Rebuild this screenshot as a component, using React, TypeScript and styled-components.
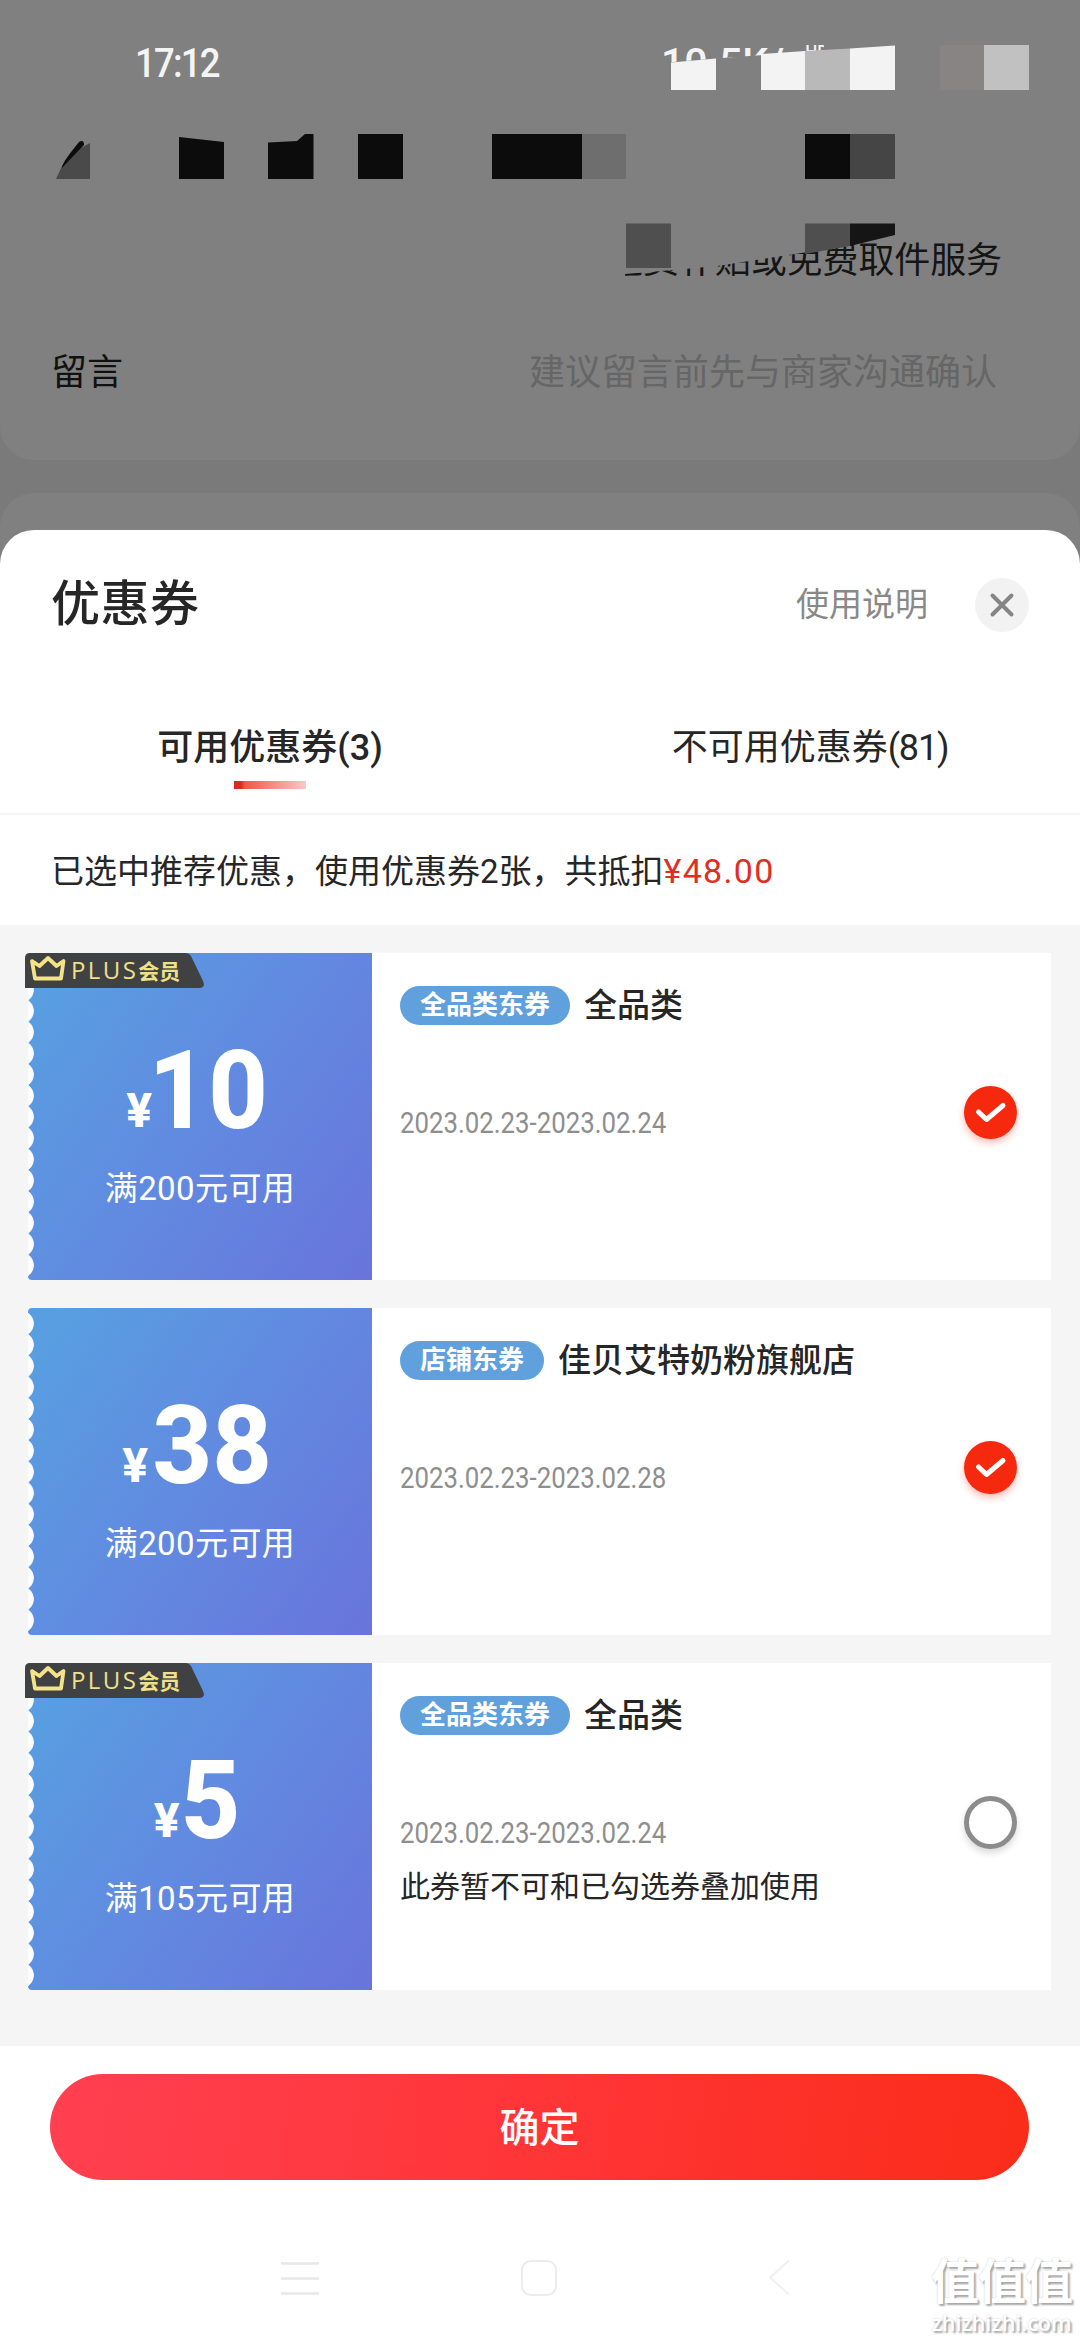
import React from "react";
import styled, { createGlobalStyle, css } from "styled-components";

const GlobalStyle = createGlobalStyle`
  * { box-sizing: border-box; }
  body {
    margin: 0;
    background: #7a7a7a;
    font-family: Roboto, "Noto Sans CJK SC", sans-serif;
    color: #262626;
  }
  button { font: inherit; border: 0; padding: 0; background: none; color: inherit; }
`;

const Screen = styled.div`
  position: relative;
  display: flex;
  flex-direction: column;
  width: 1080px;
  height: 2340px;
  overflow: hidden;
  background: #7a7a7a;
`;

/* dimmed order page behind the sheet */

const OrderCard = styled.section`
  display: flex;
  flex-direction: column;
  height: 460px;
  flex: none;
  background: #808080;
  border-radius: 0 0 34px 34px;
`;

const StatusBar = styled.header`
  display: flex;
  justify-content: space-between;
  height: 125px;
  padding: 39px 256px 0 135px;
  color: #f4f4f4;
  font-weight: 500;
  font-size: 40px;
  line-height: 48px;
`;

const Clock = styled.span`
  letter-spacing: -2px;
  font-size: 41px;
  transform: scaleX(0.89);
  transform-origin: left;
`;

const Network = styled.span`
  display: flex;
  align-items: flex-start;
  width: 163px;
  height: 48px;
  font-size: 41px;
  clip-path: polygon(0 0, 100% 0, 100% 12px, 74px 18px, 0 24px);
`;

const HdMark = styled.sup`
  margin-left: auto;
  font-size: 17px;
  line-height: 24px;
`;

const ServiceRow = styled.div`
  display: flex;
  justify-content: flex-end;
  height: 204px;
  padding: 109px 78px 0 0;
`;

const ServiceText = styled.span`
  height: 54px;
  font-size: 36px;
  line-height: 54px;
  letter-spacing: -0.1px;
  color: #151515;
  clip-path: polygon(18px 40px, 66px 36px, 110px 32px, 240px 12px, 288px 1px, 288px 0, 100% 0, 100% 100%, 18px 100%);
`;

const MessageRow = styled.div`
  display: flex;
  justify-content: space-between;
  padding: 17px 83px 0 51px;
  font-size: 36px;
  line-height: 54px;
  color: #111;
`;

const Placeholder = styled.span`
  color: #666;
`;

const NextCard = styled.section`
  height: 90px;
  flex: none;
  margin-top: 33px;
  background: #808080;
  border-radius: 34px 34px 0 0;
`;

const Mosaic = styled.svg`
  position: absolute;
  left: 0;
  top: 0;
`;

/* coupon sheet */

const Sheet = styled.main`
  display: flex;
  flex-direction: column;
  flex: 1;
  margin-top: -53px;
  background: #fff;
  border-radius: 34px 34px 0 0;
`;

const SheetHeader = styled.div`
  display: flex;
  align-items: center;
  height: 149px;
  padding: 0 51px;
`;

const Title = styled.h1`
  flex: 1;
  margin: 0;
  font-size: 49px;
  line-height: 60px;
  font-weight: 500;
  letter-spacing: 0.5px;
`;

const HelpLink = styled.a`
  margin-right: 47px;
  font-size: 33px;
  line-height: 48px;
  color: #888;
`;

const CloseButton = styled.button`
  display: grid;
  place-items: center;
  width: 54px;
  height: 54px;
  border-radius: 50%;
  background: #f2f2f2;
`;

const Tabs = styled.nav`
  display: grid;
  grid-template-columns: 1fr 1fr;
  height: 136px;
  border-bottom: 2px solid #f4f4f4;
`;

const Tab = styled.div<{ $active?: boolean }>`
  display: flex;
  flex-direction: column;
  align-items: center;
  padding-top: 44px;
  font-size: 36px;
  line-height: 50px;
  font-weight: ${(p) => (p.$active ? 500 : 400)};
`;

const Count = styled.span`
  letter-spacing: -1.2px;
`;

const TabLine = styled.i`
  width: 72px;
  height: 8px;
  margin-top: 8px;
  background: linear-gradient(90deg, #d82c20 0 7px, #f0584d 11px, #f9c9c6);
`;

const Summary = styled.p`
  margin: 0;
  height: 110px;
  padding: 30px 51px 0;
  font-size: 33px;
  line-height: 52px;
`;

const Saved = styled.span`
  color: #e02e24;
  font-size: 34px;
  letter-spacing: 1.3px;
`;

const CouponList = styled.div`
  display: flex;
  flex-direction: column;
  gap: 28px;
  height: 1121px;
  padding: 28px 29px 0 28px;
  background: #f5f5f5;
`;

const Coupon = styled.article`
  display: flex;
  height: 327px;
`;

const Stub = styled.div`
  position: relative;
  display: flex;
  flex-direction: column;
  align-items: center;
  width: 344px;
  padding-top: 84px;
  color: #fff;
  background: linear-gradient(125deg, #589fe1 5%, #6288e0 55%, #6974db);
  border-radius: 4px 0 0 4px;

  &::before {
    content: "";
    position: absolute;
    left: 0;
    top: 5px;
    width: 7px;
    height: 318px;
    background: radial-gradient(circle at -7px 50%, #fcfcfc 12.4px, transparent 13.2px) 0 0 / 7px 21.2px repeat-y;
  }
`;

const Amount = styled.div`
  display: flex;
  align-items: baseline;
  margin-right: 8px;
  font-size: 110px;
  line-height: 108px;
  font-weight: 800;
`;

const Currency = styled.span`
  position: relative;
  top: -1px;
  left: 2px;
  font-size: 48px;
`;

const Digits = styled.span<{ $leadingOne: boolean }>`
  margin-left: ${(p) => (p.$leadingOne ? -9 : -1)}px;
  transform: scaleX(0.94);
  transform-origin: right;
`;

const Threshold = styled.div`
  font-size: 33px;
  line-height: 46px;
  letter-spacing: 0.4px;
`;

const Ribbon = styled.div`
  position: absolute;
  left: -3px;
  top: 0;
  display: flex;
  align-items: center;
  width: 179px;
  height: 35px;
  color: #efe08c;
  white-space: nowrap;
`;

const RibbonShape = styled.svg`
  position: absolute;
  inset: 0;
`;

const RibbonText = styled.span`
  position: relative;
  margin-left: 46px;
  font-family: "Open Sans", "Noto Sans CJK SC", sans-serif;
  font-size: 24px;
  line-height: 34px;
  letter-spacing: 2.4px;

  b {
    font-size: 21px;
    font-weight: 700;
    letter-spacing: 0;
  }
`;

const Details = styled.div`
  display: flex;
  flex: 1;
  align-items: center;
  justify-content: space-between;
  padding-right: 34px;
  background: #fff;
`;

const Info = styled.div`
  align-self: stretch;
  padding: 29px 0 0 28px;
`;

const Heading = styled.div`
  display: flex;
  align-items: center;
  gap: 14px;
  height: 47px;
  font-size: 33px;
  font-weight: 500;
`;

const Scope = styled.span`
  height: 44px;
  line-height: 43px;
`;

const Tag = styled.span`
  height: 39px;
  padding: 0 20px;
  border-radius: 20px;
  background: #5fa0dd;
  color: #fff;
  font-size: 26px;
  line-height: 39px;
  font-weight: 700;
`;

const Period = styled.div`
  margin-top: 74px;
  width: max-content;
  font-size: 30px;
  line-height: 40px;
  font-weight: 400;
  color: #8e8e8e;
  transform: scaleX(0.86);
  transform-origin: left;
`;

const Note = styled.div`
  margin-top: 12px;
  font-size: 30px;
  line-height: 44px;
`;

const Radio = styled.span<{ $checked: boolean }>`
  display: grid;
  place-items: center;
  width: 53px;
  height: 53px;
  margin-bottom: 9px;
  border-radius: 50%;
  ${(p) =>
    p.$checked
      ? css`
          background: #f6280e;
          box-shadow: 0 4px 7px rgba(246, 40, 14, 0.3);
        `
      : css`
          border: 5px solid #8c8c8c;
          box-shadow: 0 4px 7px rgba(0, 0, 0, 0.15);
        `}
`;

const Footer = styled.footer`
  display: flex;
  padding: 28px 51px 0 50px;
`;

const Confirm = styled.button`
  flex: 1;
  height: 106px;
  padding-bottom: 4px;
  border-radius: 53px;
  background: linear-gradient(100deg, #ff4051, #ff3434 55%, #fa2c19);
  color: #fff;
  font-size: 40px;
  font-weight: 500;
`;

const SystemNav = styled.div`
  display: grid;
  grid-template-columns: 239px 248px 24px;
  padding: 77px 0 0 280px;
`;

const Watermark = styled.div`
  position: absolute;
  right: 8px;
  bottom: 3px;
  display: flex;
  flex-direction: column;
  align-items: center;
  color: #fff;
  text-shadow: 2px 2px 2px #a6a6a6, 0 0 2px #cfcfcf;
`;

const WatermarkName = styled.span`
  font-size: 48px;
  line-height: 52px;
  font-weight: 700;
  letter-spacing: -1px;
`;

const WatermarkUrl = styled.span`
  font-family: "Open Sans", sans-serif;
  font-size: 21.5px;
  line-height: 28px;
  font-weight: 600;
`;

type CouponData = {
  amount: string;
  threshold: string;
  tag: string;
  scope: string;
  period: string;
  note?: string;
  plus: boolean;
  checked: boolean;
};

const coupons: CouponData[] = [
  { amount: "10", threshold: "满200元可用", tag: "全品类东券", scope: "全品类", period: "2023.02.23-2023.02.24", plus: true, checked: true },
  { amount: "38", threshold: "满200元可用", tag: "店铺东券", scope: "佳贝艾特奶粉旗舰店", period: "2023.02.23-2023.02.28", plus: false, checked: true },
  { amount: "5", threshold: "满105元可用", tag: "全品类东券", scope: "全品类", period: "2023.02.23-2023.02.24", note: "此券暂不可和已勾选券叠加使用", plus: true, checked: false },
];

function PlusRibbon() {
  return (
    <Ribbon>
      <RibbonShape width="179" height="35" viewBox="0 0 179 35">
        <path d="M0 35V5Q0 0 5 0H160Q164 0 166 3L178 28Q181 35 174 35Z" fill="#404143" />
        <path d="M7 8L14.5 13L23 5L31.500 13L38.500 8L36 25.500H10Z" fill="none" stroke="#f5e487" strokeWidth="3.8" strokeLinejoin="round" />
      </RibbonShape>
      <RibbonText>
        PLUS<b>会员</b>
      </RibbonText>
    </Ribbon>
  );
}

function CouponCard({ data }: { data: CouponData }) {
  return (
    <Coupon>
      <Stub>
        {data.plus && <PlusRibbon />}
        <Amount>
          <Currency>¥</Currency>
          <Digits $leadingOne={data.amount.startsWith("1")}>{data.amount}</Digits>
        </Amount>
        <Threshold>{data.threshold}</Threshold>
      </Stub>
      <Details>
        <Info>
          <Heading>
            <Tag>{data.tag}</Tag>
            <Scope>{data.scope}</Scope>
          </Heading>
          <Period>{data.period}</Period>
          {data.note && <Note>{data.note}</Note>}
        </Info>
        <Radio $checked={data.checked}>
          {data.checked && (
            <svg width="34" height="24" viewBox="0 0 34 24" fill="none" stroke="#fff" strokeWidth="5" strokeLinecap="round" strokeLinejoin="round">
              <path d="M4.500 12L12.500 19.500L29 5.500" />
            </svg>
          )}
        </Radio>
      </Details>
    </Coupon>
  );
}

function MosaicBlocks() {
  return (
    <Mosaic width="1080" height="300" viewBox="0 0 1080 300">
      <path d="M671 62.500L716 58.500V90H671Z" fill="#f3f3f3" />
      <path d="M761 54L805 51V90H761Z" fill="#f3f3f3" />
      <path d="M805 51L850 48.500V90H805Z" fill="#b9b9b9" />
      <path d="M850 48.500L895 45.500V90H850Z" fill="#f3f3f3" />
      <path d="M940 45H984V90H940Z" fill="#888484" />
      <path d="M984 45H1029V90H984Z" fill="#c1c1c1" />
      <path d="M56 179L62 166L72 153L90 143V179Z" fill="#4a4a4a" />
      <path d="M62 168Q61 164 79 142Q84 139 84 145Q74 155 62 168Z" fill="#0c0c0c" />
      <path d="M179 137L224 142V179H179Z" fill="#0c0c0c" />
      <path d="M268 142.500L297 141L305 134H313.500V179H268Z" fill="#0c0c0c" />
      <path d="M358 134H403V179H358Z" fill="#0c0c0c" />
      <path d="M492 134H582V179H492Z" fill="#0c0c0c" />
      <path d="M582 134H626V179H582Z" fill="#6e6e6e" />
      <path d="M805 134H850V179H805Z" fill="#0c0c0c" />
      <path d="M850 134H895V179H850Z" fill="#454545" />
      <path d="M626 223.500H671V268H626Z" fill="#4f4f4f" />
      <path d="M805 223.500H850V246L805 254Z" fill="#4f4f4f" />
      <path d="M850 223.500H895V235L850 246Z" fill="#151515" />
    </Mosaic>
  );
}

export default function App() {
  return (
    <Screen>
      <GlobalStyle />
      <OrderCard>
        <StatusBar>
          <Clock>17:12</Clock>
          <Network>
            10.5K/s<HdMark>HD</HdMark>
          </Network>
        </StatusBar>
        <ServiceRow>
          <ServiceText>运费补贴或免费取件服务</ServiceText>
        </ServiceRow>
        <MessageRow>
          <span>留言</span>
          <Placeholder>建议留言前先与商家沟通确认</Placeholder>
        </MessageRow>
      </OrderCard>
      <NextCard />
      <MosaicBlocks />
      <Sheet>
        <SheetHeader>
          <Title>优惠券</Title>
          <HelpLink>使用说明</HelpLink>
          <CloseButton aria-label="关闭">
            <svg width="28" height="28" viewBox="0 0 28 28" stroke="#858585" strokeWidth="4" strokeLinecap="round">
              <path d="M4.500 4.500L23.500 23.500M23.500 4.500L4.500 23.500" />
            </svg>
          </CloseButton>
        </SheetHeader>
        <Tabs>
          <Tab $active>
            可用优惠券(3)
            <TabLine />
          </Tab>
          <Tab>
            <span>
              不可用优惠券<Count>(81)</Count>
            </span>
          </Tab>
        </Tabs>
        <Summary>
          已选中推荐优惠，使用优惠券2张，共抵扣<Saved>¥48.00</Saved>
        </Summary>
        <CouponList>
          {coupons.map((c) => (
            <CouponCard key={c.amount} data={c} />
          ))}
        </CouponList>
        <Footer>
          <Confirm>确定</Confirm>
        </Footer>
        <SystemNav>
          <svg width="40" height="42" viewBox="0 0 40 42" stroke="#e8e8e8" strokeWidth="2.500">
            <path d="M1 6.500H39M1 21.500H39M1 36.500H39" />
          </svg>
          <svg width="40" height="42" viewBox="0 0 40 42" fill="none" stroke="#ececec" strokeWidth="2">
            <rect x="3" y="4" width="34" height="34" rx="9" />
          </svg>
          <svg width="24" height="42" viewBox="0 0 24 42" fill="none" stroke="#f0f0f0" strokeWidth="2">
            <path d="M22 3.500L3 20.500L22 37.500" />
          </svg>
        </SystemNav>
      </Sheet>
      <Watermark>
        <WatermarkName>值值值</WatermarkName>
        <WatermarkUrl>zhizhizhi.com</WatermarkUrl>
      </Watermark>
    </Screen>
  );
}
